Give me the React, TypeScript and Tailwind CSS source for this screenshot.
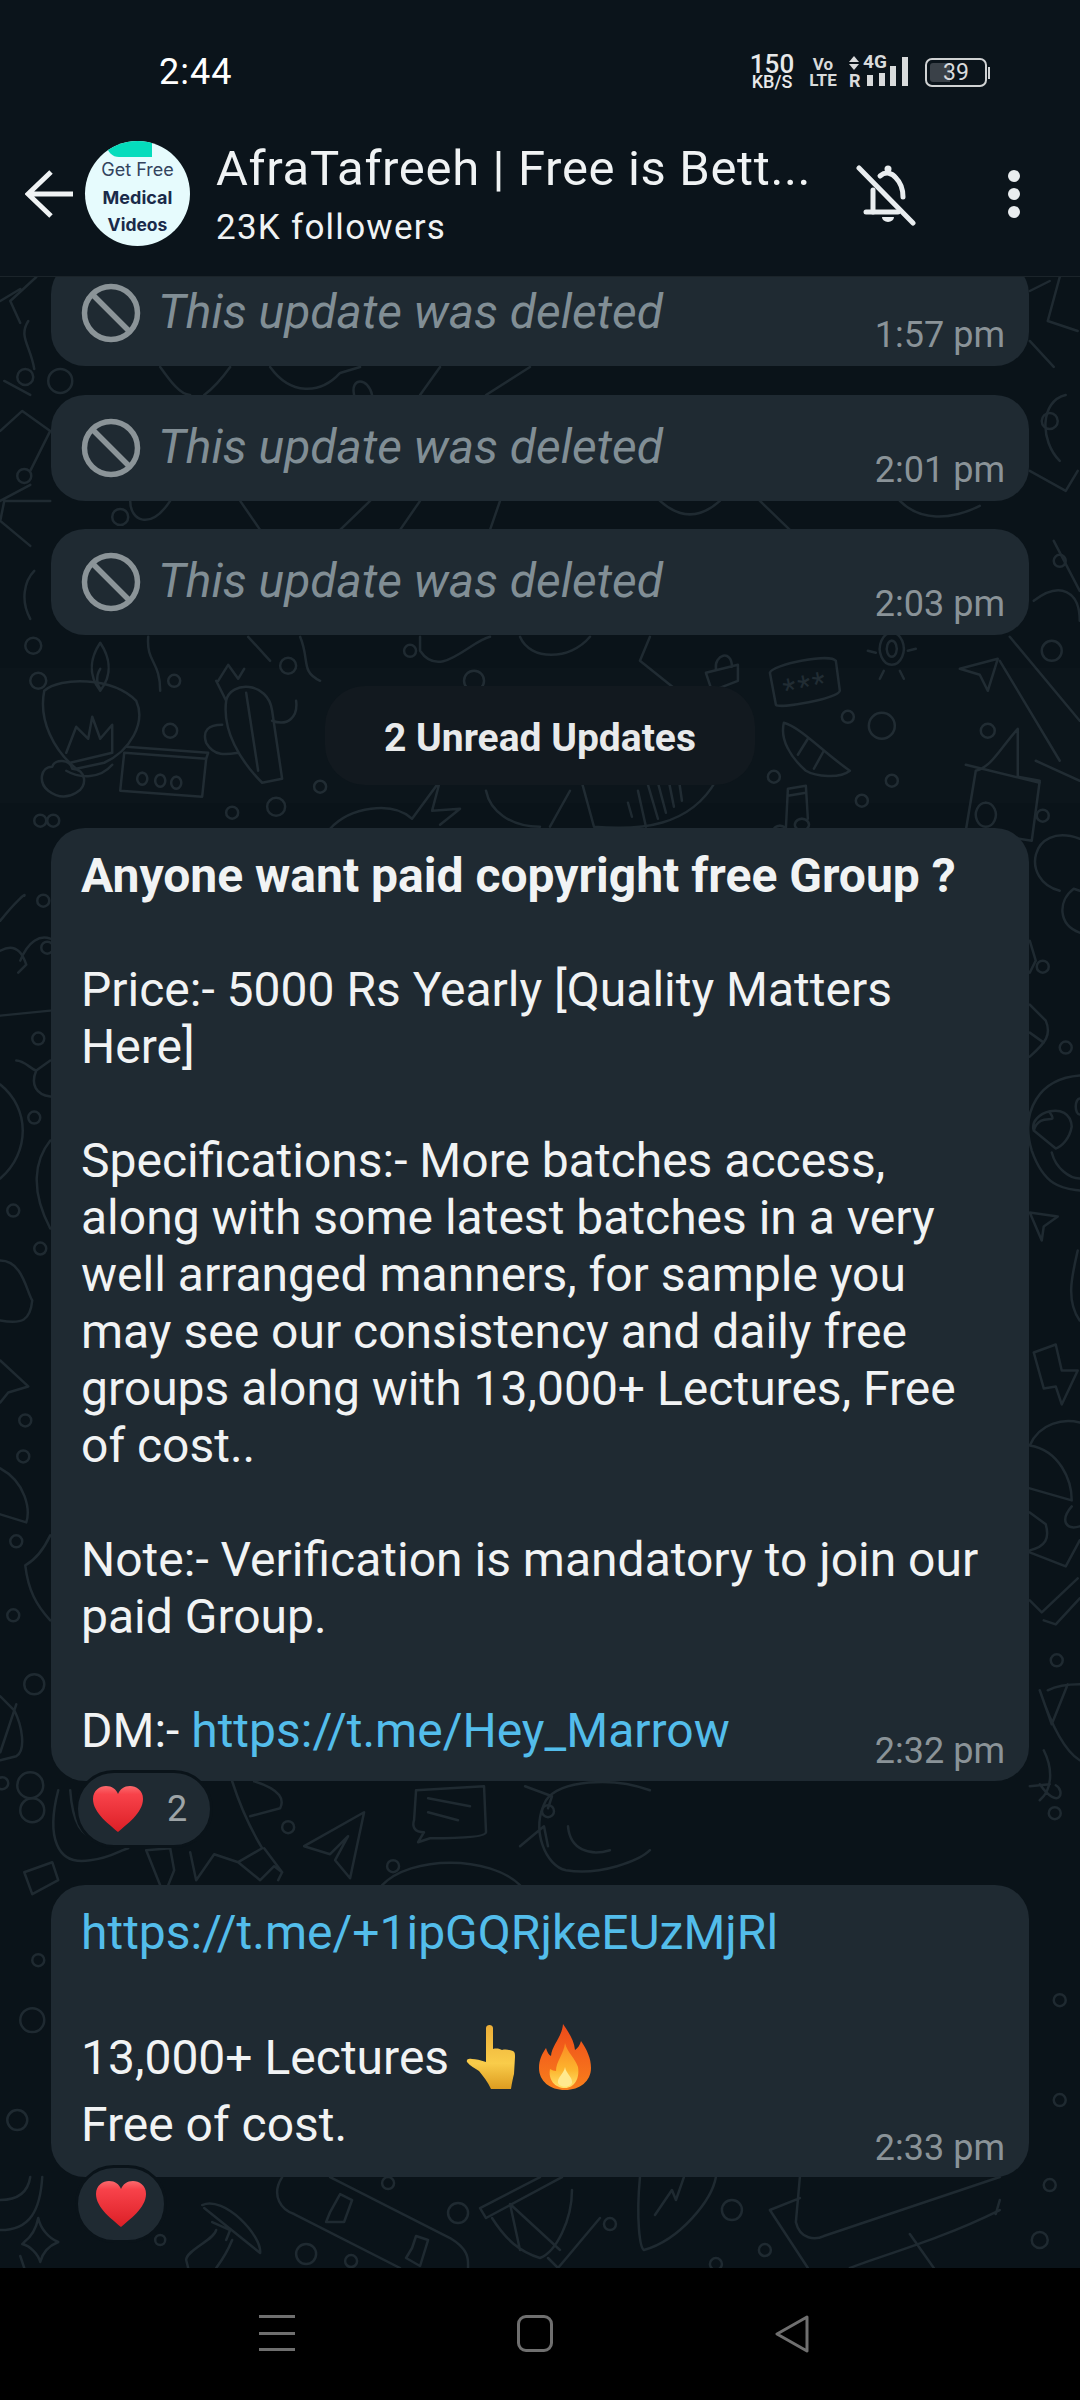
const doodlePaths = [
  // candle + diya
  'M100 690 C86 672 92 654 100 642 C108 654 114 672 100 690 M100 668 C95 676 97 684 100 688',
  'M44 690 C60 676 112 676 136 700 C146 722 130 750 104 762 L76 768 C54 750 38 720 44 690 M70 762 L112 752 M66 770 C80 778 100 778 112 764 M66 752 L76 726 L88 738 L92 716 L100 738 L112 724 L112 752',
  // cactus
  'M226 700 C230 680 268 680 272 710 L282 778 L262 782 C240 760 222 730 226 700 M246 692 L258 770 M216 680 L226 700 M218 680 L228 664 L238 678 L244 668 M272 720 C288 726 298 716 296 700 M222 724 C208 724 202 730 206 742 C214 756 226 754 238 752',
  // card with dots
  'M124 752 L206 758 L202 796 L120 790 Z M126 746 L208 752 L206 758 M142 772 a5 6 0 1 0 .1 0 M160 774 a5 6 0 1 0 .1 0 M176 776 a5 6 0 1 0 .1 0',
  // cloud
  'M48 790 C38 782 40 766 52 766 C54 758 70 758 72 768 C86 768 88 786 76 792 C66 798 56 796 48 790',
  // lock
  'M706 672 L738 664 L738 680 L712 690 Z M716 668 C714 654 732 648 732 666',
  // stars card
  'M770 672 C772 664 830 652 836 660 L840 690 C838 698 780 708 776 704 Z',
  // sun spiral
  'M892 632 a12 16 0 1 1 -.1 0 M892 640 a5 8 0 1 1 -.1 0 M868 650 L876 652 M908 650 L916 648 M880 616 L884 624 M904 616 L900 624 M880 678 L884 670 M904 678 L900 670',
  // plane
  'M960 668 L998 658 L988 690 L980 674 Z',
  // shell
  'M784 722 C800 726 824 752 850 770 C840 778 816 776 806 770 C790 756 780 738 784 722 M808 738 L798 754 M824 750 L814 768',
  // house
  'M966 830 L976 770 C992 766 1000 748 1018 728 L1018 776 L1040 780 L1032 840 Z M966 764 L1040 782 M986 802 a10 12 0 1 0 .1 0',
  // note
  'M780 825 a7 6 0 1 0 .1 0 M802 818 a7 6 0 1 0 .1 0 M786 828 L788 788 L806 785 L808 818 M788 795 L806 792',
  // sound wave
  'M628 802 L632 816 M638 790 L646 826 M648 784 L658 818 M658 782 L666 812 M668 776 L674 806 M678 772 L682 800',
  // curved shapes under the pill
  'M486 790 C490 810 510 826 540 826 M550 826 L570 790 M576 760 L594 826 C640 830 690 826 716 780',
  // leaf and fruit above first big bubble
  'M330 828 C350 806 392 800 412 818 M412 818 L440 780 L432 810 L460 808 L440 824',
  // rocket
  'M232 1781 C240 1806 250 1828 262 1848 L238 1862 L260 1880 L274 1866 L282 1872 M254 1781 C282 1790 284 1800 280 1808 L250 1816 M264 1848 L282 1872 L278 1880 M190 1852 L196 1880 L214 1854 L238 1862',
  // send plane
  'M304 1846 L364 1812 L350 1878 L335 1860 L348 1836 L330 1854 Z',
  // speech bubble
  'M416 1790 L484 1786 L486 1832 C486 1838 440 1838 430 1838 L418 1842 L424 1832 C414 1832 412 1826 414 1820 Z M428 1798 L470 1806 M428 1812 L458 1820',
  // sun face
  'M546 1800 C560 1780 612 1776 650 1790 M546 1800 C530 1830 546 1866 566 1870 C600 1876 640 1860 650 1850 M525 1786 L552 1796 L548 1808 M520 1846 L544 1826 L548 1846 M568 1826 C570 1850 590 1856 610 1850',
  // dome and bolt
  'M382 1885 C410 1855 490 1855 520 1885 M146 1850 L170 1848 L174 1870 L168 1885 M146 1850 L160 1885',
  // banana and box
  'M58 1790 C46 1836 56 1866 90 1860 C110 1858 120 1850 128 1848 M70 1790 C72 1820 80 1838 98 1838 M24 1872 L52 1862 L58 1880 L32 1894 Z',
  // left margin
  'M0 1084 C30 1108 30 1152 0 1178 M20 960 C28 940 40 934 50 938 M0 920 C16 900 26 892 24 895 M0 950 C18 940 24 958 26 964 L18 972 M16 1060 C24 1060 30 1068 36 1070 L50 1060 M36 1070 C30 1084 36 1094 50 1096 M50 1140 C34 1160 30 1190 50 1228 M0 1260 C22 1260 26 1290 32 1300 C30 1320 22 1324 0 1320 M0 1015 L50 1010',
  'M0 1360 L28 1386 L8 1392 L0 1402 M0 1468 C26 1482 30 1510 26 1522 L0 1514 M50 1535 C42 1552 34 1560 25 1565 C28 1590 36 1605 50 1620 M0 1696 L14 1710 C22 1726 26 1750 16 1756 L0 1760 M16 1704 L0 1752',
  // right margin
  'M1060 890 C1020 880 1030 820 1080 838 M1080 890 L1074 888 C1058 900 1058 924 1080 932 M1030 940 L1036 960 L1030 972 M1030 1004 L1046 1020 C1052 1034 1046 1042 1030 1056 M1030 1032 L1044 1042 M1080 1075 C1040 1078 1020 1110 1032 1150 C1046 1190 1068 1188 1080 1190 M1034 1130 C1040 1110 1060 1126 1050 1112 M1034 1130 C1028 1112 1070 1098 1072 1126 C1070 1138 1062 1146 1056 1148 Z M1052 1152 C1056 1168 1070 1178 1080 1178 M1030 1212 L1058 1216 L1044 1226 L1042 1240 Z M1078 1250 C1072 1276 1066 1300 1080 1320 M1080 1098 a4 8 0 1 0 0 16',
  'M1034 1352 L1056 1344 L1062 1370 L1078 1370 L1062 1404 L1056 1386 L1044 1388 Z M1030 1445 C1040 1422 1064 1418 1080 1422 M1030 1445 C1060 1450 1072 1480 1072 1500 L1030 1488 M1030 1512 L1046 1524 C1050 1538 1046 1546 1030 1550 M1072 1506 C1060 1520 1066 1530 1080 1526 M1030 1552 L1066 1566 L1080 1540 M1030 1600 L1042 1612 L1078 1578 M1056 1624 L1080 1598 M1044 1620 L1056 1624 M1048 1690 C1060 1684 1072 1684 1080 1684 M1040 1690 C1050 1720 1064 1750 1080 1760 M1040 1690 L1052 1724 L1068 1684 M1040 1800 C1052 1790 1054 1770 1044 1750 M1030 1786 L1050 1784 M1056 1785 C1066 1790 1060 1812 1040 1784',
  // bottom strip
  'M20 2256 L24 2268 M24 2242 C32 2236 36 2228 38 2218 C40 2228 48 2238 58 2242 C48 2246 42 2254 40 2262 C38 2254 30 2246 22 2244 Z M0 2230 C30 2230 40 2210 42 2177 M0 2200 C20 2200 28 2190 30 2177',
  // mushroom
  'M202 2205 C224 2195 262 2236 260 2253 L204 2208 M212 2222 L230 2230 L226 2240 M216 2230 C214 2240 186 2250 186 2260 L188 2268 M232 2240 C228 2250 222 2260 216 2268',
  // skateboard
  'M282 2177 C270 2196 282 2210 294 2214 L400 2268 M330 2177 L450 2238 C470 2250 468 2260 468 2268 M330 2212 L326 2222 L344 2222 L352 2200 L340 2194 Z M412 2248 L406 2258 L420 2266 L428 2240 L416 2236 Z',
  // drum
  'M480 2208 L540 2177 M486 2218 L562 2177 M480 2208 L486 2218 M492 2218 C506 2240 520 2252 540 2258 C556 2252 572 2220 572 2190 M510 2204 L520 2250 M510 2204 L560 2250 M548 2258 L558 2268 L600 2218',
  // surfboard and board
  'M640 2177 C636 2220 640 2248 644 2250 C680 2240 712 2200 716 2177 M655 2215 L672 2190 L676 2200 L684 2177',
  'M770 2210 L808 2268 M770 2210 L800 2198 M800 2177 L796 2222 C800 2240 816 2240 824 2236 L1000 2177 M1000 2210 C940 2240 880 2256 850 2268 M1000 2200 L996 2214 M910 2234 L934 2268',
  // top gap between deleted cards
  'M160 366 C170 380 180 394 190 394 M230 366 C220 380 212 388 204 394 M0 430 L22 410 L50 430 L30 470 M270 366 C290 394 320 394 340 372 L360 366 M354 394 C350 376 368 376 372 394 M440 366 L420 394 M486 394 L530 366 M0 300 L20 288 M36 276 L10 300 L20 322 M28 320 C18 336 30 344 34 368 M0 500 L30 484 M4 380 L30 394 M30 618 C20 600 24 580 34 570 M50 500 L4 500 L0 520 L30 545 M130 500 C130 520 150 530 170 500 M240 500 L260 529 M370 500 L340 529 M420 500 L400 529 M500 500 L490 529 M660 500 C680 518 700 518 720 500 M760 500 L790 529 M900 500 C920 520 950 520 980 505 M148 636 C146 662 160 660 160 690 M248 636 L270 660 M300 636 C310 660 300 670 320 680 M420 636 L420 650 C440 680 470 640 490 636 M520 636 C530 660 570 660 590 636 M650 636 L640 660 L690 700',
  'M1030 290 L1050 280 M1060 276 L1048 320 L1078 330 M1030 340 L1054 366 M1066 394 C1040 400 1040 440 1060 460 M1030 470 L1066 490 L1078 470 M1054 540 L1080 590 M1034 600 C1060 580 1080 590 1080 620 M1010 636 L1080 720 M1000 660 L1060 760 M1036 760 L1080 780',
];

const doodleCircles: [number, number, number][] = [
  [38, 680, 8], [174, 680, 6], [288, 665, 8], [410, 650, 6], [474, 680, 10], [40, 820, 6], [170, 730, 7],
  [320, 786, 6], [276, 806, 9], [232, 812, 6], [53, 820, 6], [848, 716, 6], [882, 725, 13], [988, 730, 7], [774, 776, 6],
  [892, 780, 6], [862, 800, 6], [1043, 815, 6], [38, 1038, 6], [47, 947, 6], [34, 1117, 6], [13, 1210, 6], [40, 1248, 6],
  [25, 1420, 6], [23, 1456, 6], [16, 1541, 6], [13, 1615, 6], [34, 1684, 10], [30, 1785, 13], [2, 1783, 6], [43, 900, 6],
  [1043, 966, 6], [1066, 1047, 6], [1055, 1813, 6], [1057, 1660, 6], [32, 1810, 12], [288, 1827, 6], [393, 1866, 6], [298, 1903, 6],
  [548, 1811, 6], [160, 2240, 5], [306, 2254, 10], [351, 2261, 6], [388, 2183, 6], [458, 2213, 10], [610, 2224, 6],
  [732, 2210, 10], [716, 2264, 6], [765, 2250, 6], [1050, 2185, 6], [1040, 2240, 8], [17, 2120, 10], [1060, 2100, 6],
  [38, 1960, 6], [32, 2020, 12], [1060, 2000, 6], [120, 516, 8], [33, 645, 8],
  [1050, 420, 8], [1060, 560, 6], [60, 380, 12], [25, 376, 8], [24, 475, 7], [1052, 650, 10],
];

function Doodles() {
  return (
    <svg className="absolute inset-0 h-full w-full" viewBox="0 276 1080 1992" fill="none">
      <g stroke="#1f2a31" strokeWidth="2.5" strokeLinecap="round" strokeLinejoin="round">
        {doodlePaths.map((d, i) => (
          <path key={i} d={d} />
        ))}
        {doodleCircles.map((c, i) => (
          <circle key={i} cx={c[0]} cy={c[1]} r={c[2]} />
        ))}
      </g>
      <g fill="#1f2a31" fontSize="30" fontFamily="Roboto, sans-serif">
        <text x="786" y="700" transform="rotate(-12 786 700)" letterSpacing="2">***</text>
      </g>
    </svg>
  );
}

function Heart({ id }: { id: string }) {
  return (
    <svg width="52" height="48" viewBox="0 0 52 48">
      <defs>
        <linearGradient id={id} x1="0" y1="0" x2="0" y2="1">
          <stop offset="0" stopColor="#fb6a6d" />
          <stop offset="0.18" stopColor="#f8424a" />
          <stop offset="1" stopColor="#dc1f26" />
        </linearGradient>
      </defs>
      <path
        d="M26 47 C18 40 1 28 1 14 C1 5 8 1 14 1 C20 1 24 4 26 9 C28 4 32 1 38 1 C44 1 51 5 51 14 C51 28 34 40 26 47 Z"
        fill={`url(#${id})`}
      />
    </svg>
  );
}

function PointingFinger() {
  return (
    <svg width="50" height="66" viewBox="0 0 50 66">
      <defs>
        <linearGradient id="hand" x1="0" y1="0" x2="0" y2="1">
          <stop offset="0" stopColor="#ecae38" />
          <stop offset="0.6" stopColor="#f9cc4a" />
          <stop offset="1" stopColor="#dd9c20" />
        </linearGradient>
      </defs>
      <path
        d="M20 4 C20 0 27 0 27 4 L27 25 C31 24 34 25 36 26 C40 25 44 26 47 27 C49 28 49 30 49 33 L48 50 C47 54 46 58 45 65 L25 65 C22 58 17 52 13 47 C9 44 4 42 1 38 C0 35 3 34 6 35 C10 35 14 36 20 38 Z"
        fill="url(#hand)"
      />
    </svg>
  );
}

function Fire() {
  return (
    <svg width="54" height="68" viewBox="0 0 54 68">
      <defs>
        <linearGradient id="flameOuter" x1="0" y1="0" x2="0" y2="1">
          <stop offset="0" stopColor="#ee4a1a" />
          <stop offset="1" stopColor="#f9801c" />
        </linearGradient>
        <linearGradient id="flameInner" x1="0" y1="0" x2="0" y2="1">
          <stop offset="0" stopColor="#fa8a22" />
          <stop offset="0.6" stopColor="#fdb52e" />
          <stop offset="1" stopColor="#ffe26a" />
        </linearGradient>
      </defs>
      <path
        d="M25 1 C31 10 36 17 37 27 C40 25 42 22 43 18 C49 27 53 35 53 45 C53 58 42 67 27 67 C12 67 1 58 1 45 C1 37 4 31 8 25 C9 29 11 32 13 33 C14 22 24 14 25 1 Z"
        fill="url(#flameOuter)"
      />
      <path
        d="M27 20 C29 29 37 35 40 44 C42 56 36 65 27 65 C17 65 10 57 12 46 C14 47 16 48 18 48 C18 38 26 31 27 20 Z"
        fill="url(#flameInner)"
      />
      <path d="M27 44 C28 51 35 54 34 60 C32 65 22 65 20 60 C19 54 26 51 27 44 Z" fill="#ffe98f" />
    </svg>
  );
}

function DeletedIcon() {
  return (
    <svg className="shrink-0" width="60" height="60" viewBox="0 0 60 60" fill="none" stroke="#8b9498" strokeWidth="5.5">
      <circle cx="30" cy="30" r="26.5" />
      <path d="M11.5 11.5 L48.5 48.5" />
    </svg>
  );
}

function MutedBell() {
  return (
    <svg className="ml-[40px] mt-[22px] shrink-0" width="62" height="66" viewBox="0 0 62 66" fill="none" stroke="#e9edef" strokeWidth="5" strokeLinecap="round">
      <path d="M3 5 L57 60" />
      <path d="M24 13 C30 8 36 10 40 15 C45 20 47 26 47 34" />
      <path d="M17 27 L17 49" />
      <path d="M10 49 L42 49" />
      <circle cx="32" cy="6" r="3.5" fill="#e9edef" stroke="none" />
      <path d="M26 54 H38 A6 5 0 0 1 26 54 Z" fill="#e9edef" stroke="none" />
    </svg>
  );
}

function Time({ value, className }: { value: string; className: string }) {
  return (
    <span className={`absolute right-[24px] text-[36px] leading-[44px] text-[#8a9398] ${className}`}>
      {value}
    </span>
  );
}

function DeletedUpdate({ time }: { time: string }) {
  return (
    <div className="relative flex h-[106px] items-start rounded-[34px] bg-[#1f2a32] pt-[23px] pl-[30px]">
      <DeletedIcon />
      <span className="ml-[17px] text-[48px] leading-[58px] italic text-[#818e95]">
        This update was deleted
      </span>
      <Time value={time} className="bottom-[9px]" />
    </div>
  );
}

export default function App() {
  return (
    <div className="flex h-[2400px] w-[1080px] flex-col overflow-hidden bg-black font-['Roboto',sans-serif]">
      <header className="h-[277px] shrink-0 border-b border-[#1b242a] bg-[#0b141b] text-[#f0f3f4]">
        <div className="flex h-[141px] items-start pt-[50px] pl-[159px]">
          <span className="text-[36px] leading-[44px] tracking-[1px] text-white">2:44</span>
          <div className="ml-auto mr-[90px] mt-[3px] flex items-start text-[#d9dbdc]">
            <div className="mr-[19px] flex w-[42px] flex-col items-center font-medium text-[#e8e9ea]">
              <span className="text-[26px] leading-[22px]">150</span>
              <span className="text-[18px] leading-[14px]">KB/S</span>
            </div>
            <div className="mt-[3px] mr-[15px] flex w-[22px] flex-col items-center text-[17px] leading-[16px] font-bold">
              <span>Vo</span>
              <span>LTE</span>
            </div>
            <div className="relative mr-[17px] h-[33px] w-[59px]">
              <div className="absolute left-0 top-[3px] h-0 w-0 border-x-[5px] border-b-[6px] border-x-transparent border-b-[#d9dbdc]" />
              <div className="absolute left-0 top-[11px] h-0 w-0 border-x-[5px] border-t-[6px] border-x-transparent border-t-[#d9dbdc]" />
              <span className="absolute left-[14px] top-0 text-[19px] leading-[18px] font-bold">4G</span>
              <span className="absolute left-0 top-[20px] text-[18px] leading-[16px] font-bold">R</span>
              <div className="absolute bottom-0 left-[18px] flex items-end gap-[5.5px]">
                <div className="h-[11px] w-[6px] bg-[#d9dbdc]" />
                <div className="h-[13px] w-[6px] bg-[#d9dbdc]" />
                <div className="h-[20px] w-[6px] bg-[#d9dbdc]" />
                <div className="h-[29px] w-[6px] bg-[#d9dbdc]" />
              </div>
            </div>
            <div className="mt-[5px] flex items-center">
              <div className="relative flex h-[29px] w-[62px] items-center justify-center overflow-hidden rounded-[7px] border-2 border-[#d0d2d3]">
                <div className="absolute inset-y-[3px] left-[3px] w-[20px] rounded-l-[3px] bg-[#3a4148]" />
                <span className="relative text-[23px] leading-none text-[#d9dbdc]">39</span>
              </div>
              <div className="ml-[1px] h-[12px] w-[2px] bg-[#d0d2d3]" />
            </div>
          </div>
        </div>
        <div className="flex items-start">
          <svg className="ml-[25px] mt-[29px] shrink-0" width="48" height="48" viewBox="0 0 48 48" fill="none" stroke="#f0f3f4" strokeWidth="5">
            <path d="M48 24 H3 M26 2 L3 24 L26 46" />
          </svg>
          <div className="relative ml-[12px] flex h-[105px] w-[105px] shrink-0 flex-col items-center overflow-hidden rounded-full bg-[#e6fbfd] pt-[19px] font-['Inter',sans-serif] text-[#1a2a4a]">
            <div className="absolute -top-[2px] left-[22px] h-[18px] w-[45px] rounded-bl-[12px] bg-[#05dcbc]" />
            <span className="text-[18px] leading-[20px] text-[#33435e]">Get Free</span>
            <span className="mt-[8px] text-[18px] leading-[20px] font-bold">Medical</span>
            <span className="mt-[7px] text-[17.5px] leading-[20px] font-bold">Videos</span>
          </div>
          <div className="ml-[26px] w-[600px] shrink-0">
            <div className="text-[49px] leading-[56px] tracking-[0.65px] whitespace-nowrap">
              AfraTafreeh | Free is Bett...
            </div>
            <div className="mt-[9px] text-[35px] leading-[44px] tracking-[1.25px]">23K followers</div>
          </div>
          <MutedBell />
          <div className="ml-[90px] mt-[29px] flex flex-col gap-[6px]">
            <div className="h-[12px] w-[12px] rounded-full bg-[#e9edef]" />
            <div className="h-[12px] w-[12px] rounded-full bg-[#e9edef]" />
            <div className="h-[12px] w-[12px] rounded-full bg-[#e9edef]" />
          </div>
        </div>
      </header>

      <main className="relative min-h-0 flex-1 overflow-hidden bg-[#0a1319]">
        <Doodles />
        <div className="relative -mt-[17px] flex flex-col">
          <div className="mx-[51px] flex flex-col gap-[28.5px]">
            <DeletedUpdate time="1:57 pm" />
            <DeletedUpdate time="2:01 pm" />
            <DeletedUpdate time="2:03 pm" />
          </div>

          <div className="mt-[33px] flex h-[135px] items-center justify-center bg-white/[0.012]">
            <div className="flex h-[99px] w-[430px] items-center justify-center rounded-[40px] bg-[#12191f] pt-[5px] text-[39px] font-bold text-[#e8eaeb]">
              2 Unread Updates
            </div>
          </div>

          <div className="relative mx-[51px] mt-[25px] h-[953px] rounded-[34px] bg-[#1f2a32] pt-[19px] pl-[30px] text-[48px] leading-[57px] text-[#f1f3f4]">
            <div className="font-bold">Anyone want paid copyright free Group ?</div>
            <div className="h-[57px]" />
            <div>Price:- 5000 Rs Yearly [Quality Matters</div>
            <div>Here]</div>
            <div className="h-[57px]" />
            <div>Specifications:- More batches access,</div>
            <div>along with some latest batches in a very</div>
            <div>well arranged manners, for sample you</div>
            <div>may see our consistency and daily free</div>
            <div>groups along with 13,000+ Lectures, Free</div>
            <div>of cost..</div>
            <div className="h-[57px]" />
            <div>Note:- Verification is mandatory to join our</div>
            <div>paid Group.</div>
            <div className="h-[57px]" />
            <div>
              DM:- <span className="text-[#53bdeb]">https://t.me/Hey_Marrow</span>
            </div>
            <Time value="2:32 pm" className="bottom-[8px]" />
          </div>

          <div className="relative z-10 -mt-[11px] ml-[75px] flex h-[78px] w-[138px] items-center rounded-[39px] border-[3px] border-[#0a1319] bg-[#1f2a32] pl-[14px]">
            <Heart id="heartOne" />
            <span className="ml-[23px] text-[36px] leading-none text-[#9da4a7]">2</span>
          </div>

          <div className="relative mx-[51px] mt-[37px] h-[292px] rounded-[34px] bg-[#1f2a32] pt-[19px] pl-[30px] text-[48px] leading-[57px] text-[#f1f3f4]">
            <div className="text-[#53bdeb]">https://t.me/+1ipGQRjkeEUzMjRl</div>
            <div className="h-[62px]" />
            <div className="flex h-[68px] items-center">
              13,000+ Lectures
              <span className="ml-[17px]"><PointingFinger /></span>
              <span className="ml-[22px]"><Fire /></span>
            </div>
            <div className="mt-[5px]">Free of cost.</div>
            <Time value="2:33 pm" className="bottom-[7px]" />
          </div>

          <div className="relative z-10 -mt-[12px] ml-[75px] flex h-[78px] w-[92px] items-center justify-center rounded-[39px] border-[3px] border-[#0a1319] bg-[#1f2a32]">
            <Heart id="heartTwo" />
          </div>
        </div>
      </main>

      <nav className="flex h-[132px] shrink-0 items-start bg-black pt-[47px]">
        <div className="ml-[259px] flex h-[36px] w-[36px] flex-col justify-between">
          <div className="h-[3px] bg-[#6f6f6f]" />
          <div className="h-[3px] bg-[#6f6f6f]" />
          <div className="h-[3px] bg-[#6f6f6f]" />
        </div>
        <div className="ml-[222px] h-[37px] w-[36px] rounded-[9px] border-[3px] border-[#6f6f6f]" />
        <svg className="ml-[221px]" width="36" height="38" viewBox="0 0 36 38" fill="none" stroke="#6f6f6f" strokeWidth="3" strokeLinejoin="round">
          <path d="M33 2 L3 19 L33 36 Z" />
        </svg>
      </nav>
    </div>
  );
}
